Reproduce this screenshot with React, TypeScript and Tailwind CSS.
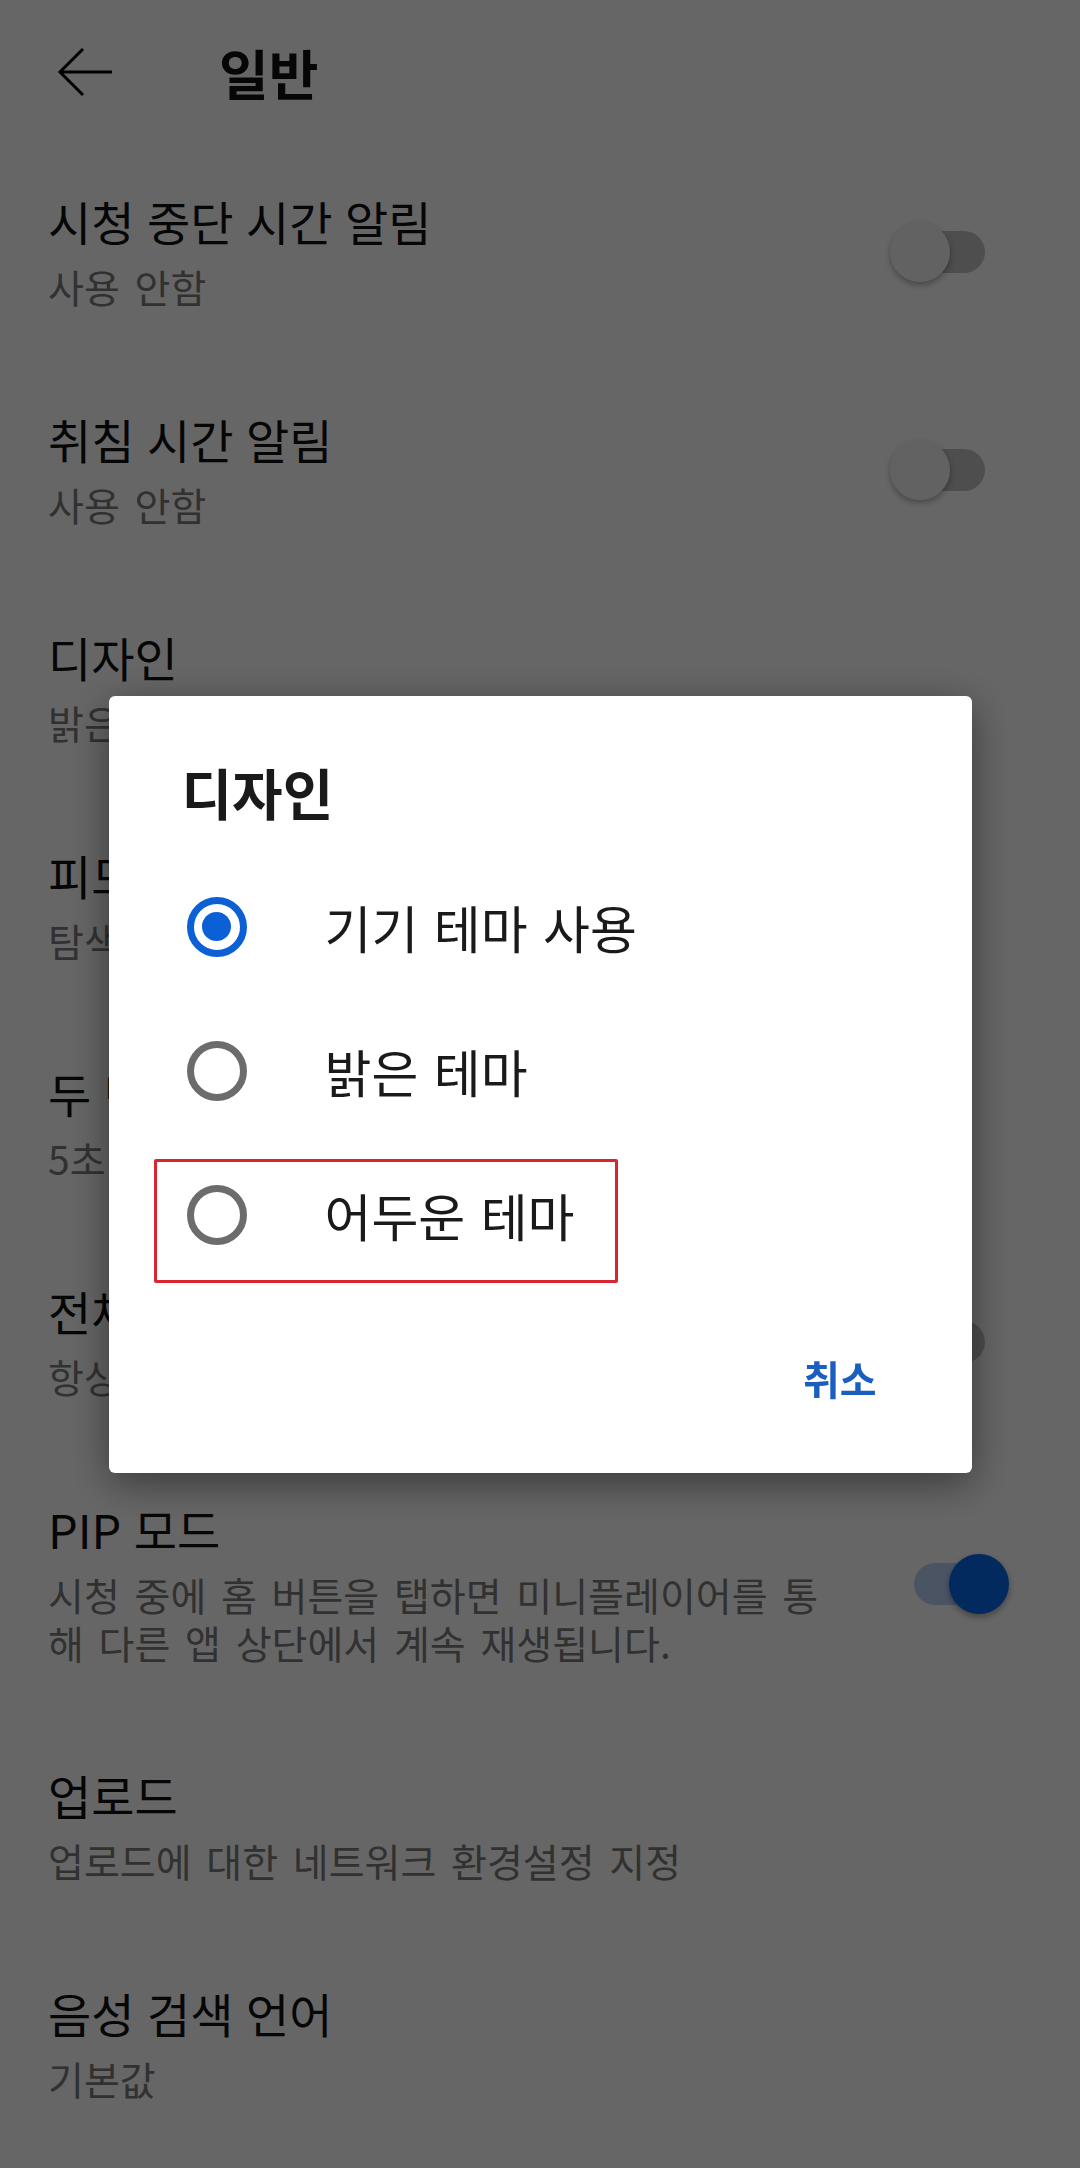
import React from "react";

type Row = {
  title: string;
  sub: React.ReactNode;
  toggle?: "on" | "off";
};

const rows: Row[] = [
  { title: "시청 중단 시간 알림", sub: "사용 안함", toggle: "off" },
  { title: "취침 시간 알림", sub: "사용 안함", toggle: "off" },
  { title: "디자인", sub: "밝은 테마" },
  { title: "피드에서 재생", sub: "탐색 및 구독 피드에서 항상 사용" },
  { title: "두 번 탭하여 탐색", sub: "5초" },
  { title: "전체 화면으로 확대", sub: "항상 전체 화면으로 확대", toggle: "off" },
  {
    title: "PIP 모드",
    sub: (
      <>
        시청 중에 홈 버튼을 탭하면 미니플레이어를 통
        <br />해 다른 앱 상단에서 계속 재생됩니다.
      </>
    ),
    toggle: "on",
  },
  { title: "업로드", sub: "업로드에 대한 네트워크 환경설정 지정" },
  { title: "음성 검색 언어", sub: "기본값" },
];

const Toggle = ({ on }: { on: boolean }) => {
  if (on) {
    return (
      <div className="relative w-[119px] h-[60px] shrink-0">
        <div className="absolute left-[24px] top-[9px] w-[90px] h-[42px] rounded-full bg-[#bbd2f7]" />
        <div className="absolute left-[59px] top-0 w-[60px] h-[60px] rounded-full bg-[#0569eb] shadow-[0_3px_6px_rgba(0,0,0,0.35)]" />
      </div>
    );
  }
  return (
    <div className="relative w-[119px] h-[60px] shrink-0">
      <div className="absolute left-[5px] top-[9px] w-[90px] h-[42px] rounded-full bg-[#c2c2c2]" />
      <div className="absolute left-0 top-0 w-[60px] h-[60px] rounded-full bg-[#f6f6f6] shadow-[0_3px_6px_rgba(0,0,0,0.3)]" />
    </div>
  );
};

const Radio = ({ checked }: { checked?: boolean }) =>
  checked ? (
    <div className="w-[60px] h-[60px] rounded-full border-[7px] border-[#0b60d5] flex items-center justify-center shrink-0">
      <div className="w-[29px] h-[29px] rounded-full bg-[#0b60d5]" />
    </div>
  ) : (
    <div className="w-[60px] h-[60px] rounded-full border-[7px] border-[#6c6c6c] shrink-0" />
  );

const options = ["기기 테마 사용", "밝은 테마", "어두운 테마"];

export default function App() {
  return (
    <div className="min-h-screen bg-white text-[#111] font-['Noto_Sans_CJK_KR','Noto_Sans',sans-serif]">
      {/* header */}
      <div className="h-[146px] flex items-center">
        <div className="w-[219px] pl-[56px] flex items-center">
          <svg width="58" height="50" viewBox="0 0 58 50" fill="none" stroke="#000" strokeWidth="3">
            <path d="M4 24h52M27 1L4 24l23 23" />
          </svg>
        </div>
        <h1 className="text-[54px] leading-[64px] font-bold">일반</h1>
      </div>

      {/* settings list */}
      <div>
        {rows.map((r) => (
          <div key={r.title} className="flex items-center pl-[48px] pr-[71px] pt-[47px] pb-[54px]">
            <div className="flex-1">
              <div className="text-[47px] leading-[56px] mb-[13px] text-[#111] [word-spacing:2px]">{r.title}</div>
              <div className="text-[39px] leading-[48px] text-[#7c7c7c] [word-spacing:6px]">{r.sub}</div>
            </div>
            {r.toggle && <Toggle on={r.toggle === "on"} />}
          </div>
        ))}
      </div>

      {/* dialog */}
      <div className="fixed inset-0 bg-black/60 flex items-center justify-center">
        <div className="w-[863px] bg-white rounded-[6px] shadow-[0_10px_40px_rgba(0,0,0,0.45)]">
          <div className="pl-[73px] pt-[63px] pb-[32px] text-[55px] leading-[64px] font-bold text-[#1a1a1a]">
            디자인
          </div>
          {options.map((o, i) => (
            <div key={o} className="relative h-[144px] flex items-center pl-[78px] gap-[78px]">
              <Radio checked={i === 0} />
              <span className="text-[51px] leading-[60px] text-[#1a1a1a] [word-spacing:4px]">{o}</span>
              {i === 2 && (
                <div className="absolute left-[45px] top-[16px] w-[464px] h-[124px] border-[3px] border-[#d7262f] rounded-[2px]" />
              )}
            </div>
          ))}
          <div className="flex justify-end pr-[95px] pt-[67px] pb-[71px]">
            <span className="text-[40px] leading-[48px] font-bold text-[#1a5fc0]">취소</span>
          </div>
        </div>
      </div>
    </div>
  );
}
